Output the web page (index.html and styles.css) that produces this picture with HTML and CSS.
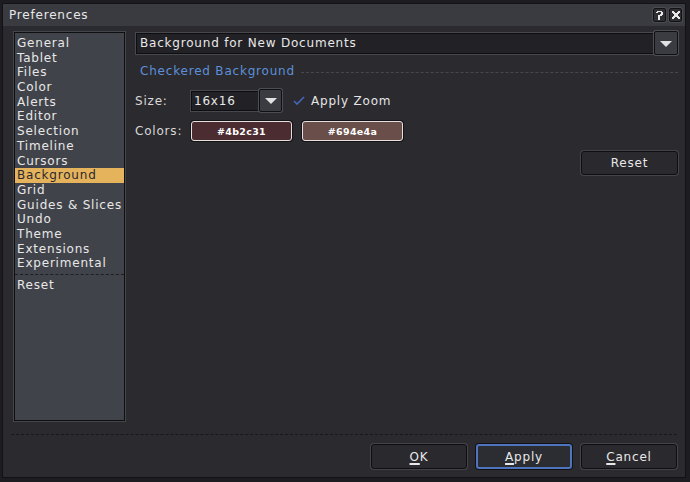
FILE: index.html
```html
<!DOCTYPE html>
<html>
<head>
<meta charset="utf-8">
<link rel="stylesheet" href="styles.css">
</head>
<body>
<div class="window">
  <div class="titlebar">
    <span class="title">Preferences</span>
    <div class="tb-buttons">
      <div class="tb-btn">
        <svg width="7" height="9" viewBox="0 0 7 9"><path d="M1 0h5v1h1v3h-1v1h-2v2h-2v-3h2v-1h1v-2h-3v1h-2v-1h1z" fill="#e8e8e8"/><rect x="2" y="7" width="2" height="2" fill="#e8e8e8"/></svg>
      </div>
      <div class="tb-btn">
        <svg width="8" height="8" viewBox="0 0 8 8"><path d="M0 0h2v1h1v1h2v-1h1v-1h2v2h-1v1h-1v2h1v1h1v2h-2v-1h-1v-1h-2v1h-1v1h-2v-2h1v-1h1v-2h-1v-1h-1z" fill="#e8e8e8"/></svg>
      </div>
    </div>
  </div>
  <div class="main">
    <div class="list">
      <div class="item">General</div>
      <div class="item">Tablet</div>
      <div class="item">Files</div>
      <div class="item">Color</div>
      <div class="item">Alerts</div>
      <div class="item">Editor</div>
      <div class="item">Selection</div>
      <div class="item">Timeline</div>
      <div class="item">Cursors</div>
      <div class="item selected">Background</div>
      <div class="item">Grid</div>
      <div class="item">Guides &amp; Slices</div>
      <div class="item">Undo</div>
      <div class="item">Theme</div>
      <div class="item">Extensions</div>
      <div class="item">Experimental</div>
      <div class="list-sep"></div>
      <div class="item">Reset</div>
    </div>
    <div class="panel">
      <div class="combo combo-wide">
        <div class="field field-wide">Background for New Documents</div>
        <div class="drop drop-big"><span class="tri"></span></div>
      </div>
      <div class="heading">
        <span class="heading-text">Checkered Background</span>
        <span class="heading-line"></span>
      </div>
      <div class="row size-row">
        <span class="label">Size:</span>
        <div class="combo combo-small">
          <div class="field field-small">16x16</div>
          <div class="drop drop-small"><span class="tri"></span></div>
        </div>
        <div class="check">
          <svg width="12" height="10" viewBox="0 0 12 10"><path d="M1 5 L4 8 L11 1" stroke="#4566b8" stroke-width="1.6" fill="none"/></svg>
          <span>Apply Zoom</span>
        </div>
      </div>
      <div class="row colors-row">
        <span class="label">Colors:</span>
        <div class="swatch swatch-a">#4b2c31</div>
        <div class="swatch swatch-b">#694e4a</div>
      </div>
      <div class="reset-row">
        <div class="btn btn-reset">Reset</div>
      </div>
    </div>
  </div>
  <div class="footer">
    <div class="footer-line"></div>
    <div class="footer-buttons">
      <div class="btn"><u>O</u>K</div>
      <div class="btn btn-focus"><u>A</u>pply</div>
      <div class="btn"><u>C</u>ancel</div>
    </div>
  </div>
</div>
</body>
</html>
```

FILE: styles.css
```css
html, body {
  margin: 0;
  padding: 0;
}
body {
  width: 690px;
  height: 482px;
  overflow: hidden;
  background: #1d1d21;
  font-family: "DejaVu Sans", sans-serif;
  font-size: 12px;
  letter-spacing: 0.8px;
  color: #e6e6e6;
}
.window {
  margin: 3px 0 0 2px;
  width: 684px;
  height: 475px;
  box-sizing: border-box;
  border: 1px solid #131316;
  background: #2b2a2f;
  display: flex;
  flex-direction: column;
}
.titlebar {
  height: 22px;
  flex: none;
  background: #3a3b41;
  display: flex;
  align-items: center;
  justify-content: space-between;
  padding: 0 3px 0 6px;
}
.title {
  color: #e8e8e8;
}
.tb-buttons {
  display: flex;
  gap: 3px;
}
.tb-btn {
  width: 13px;
  height: 14px;
  box-sizing: border-box;
  background: #2e2e33;
  border: 1px solid #121214;
  border-radius: 2px;
  box-shadow: 0 0 0 1px #4a4b51;
  display: flex;
  align-items: center;
  justify-content: center;
}
.main {
  height: 395px;
  flex: none;
  display: flex;
  padding: 6px 7px 0 11px;
  box-sizing: border-box;
  gap: 11px;
}
.list {
  width: 111px;
  height: 389px;
  box-sizing: border-box;
  border: 1px solid #0f0f12;
  box-shadow: 0 0 0 1px #45464c;
  background: #41434a;
  padding: 3px 0 0 0;
  flex: none;
}
.item {
  height: 14.7px;
  line-height: 14.7px;
  padding-left: 2px;
  color: #e8e8e8;
  white-space: nowrap;
}
.item.selected {
  background: #e6b35d;
  color: #2a292e;
}
.list-sep {
  box-sizing: border-box;
  height: 4px;
  margin-bottom: 3px;
  border-bottom: 1px dashed #1f1f23;
}
.panel {
  flex: 1;
  display: flex;
  flex-direction: column;
  margin-top: -1px;
}
.combo {
  display: flex;
  align-items: center;
}
.combo-wide {
  height: 24px;
}
.field {
  box-sizing: border-box;
  background: #222126;
  border: 1px solid #0e0e10;
  box-shadow: 0 0 0 1px #47484e;
  display: flex;
  align-items: center;
  padding-left: 3px;
  color: #e8e8e8;
}
.field-wide {
  flex: 1;
  height: 21px;
}
.drop {
  box-sizing: border-box;
  background: #3b3c42;
  border: 1px solid #101013;
  border-radius: 2px;
  box-shadow: 0 0 0 1px #4d4e54;
  display: flex;
  align-items: center;
  justify-content: center;
  flex: none;
}
.drop-big {
  width: 24px;
  height: 24px;
}
.tri {
  width: 0;
  height: 0;
  border-left: 6px solid transparent;
  border-right: 6px solid transparent;
  border-top: 6px solid #e2e2e2;
  margin-top: 1px;
}
.heading {
  margin-top: 9px;
  height: 14px;
  display: flex;
  align-items: center;
  padding-left: 4px;
}
.heading-text {
  color: #5d90d8;
  white-space: nowrap;
}
.heading-line {
  flex: 1;
  margin-left: 6px;
  border-top: 1px dashed #47484e;
  margin-top: 2px;
}
.row {
  display: flex;
  align-items: center;
}
.label {
  width: 56px;
  flex: none;
  color: #d8d8d8;
  margin-left: -1px;
}
.size-row {
  margin-top: 11px;
  height: 23px;
}
.combo-small {
  height: 23px;
}
.field-small {
  width: 68px;
  height: 20px;
  padding-left: 2px;
}
.drop-small {
  width: 23px;
  height: 23px;
}
.check {
  display: flex;
  align-items: center;
  margin-left: 11px;
  gap: 6px;
  color: #e4e4e4;
}
.colors-row {
  margin-top: 9px;
  height: 20px;
}
.swatch {
  width: 101px;
  height: 20px;
  box-sizing: border-box;
  border: 1px solid #e6e0e0;
  border-radius: 3px;
  box-shadow: 0 0 0 1px #141416;
  display: flex;
  align-items: center;
  justify-content: center;
  font-size: 9.5px;
  font-weight: bold;
  letter-spacing: 0.3px;
  color: #ffffff;
}
.swatch-a {
  background: #4b2c31;
}
.swatch-b {
  background: #694e4a;
  margin-left: 10px;
}
.reset-row {
  margin-top: 10px;
  display: flex;
  justify-content: flex-end;
}
.btn {
  width: 96px;
  height: 25px;
  box-sizing: border-box;
  background: #2a292e;
  border: 1px solid #0f0f11;
  border-radius: 3px;
  box-shadow: 0 0 0 1px #434349;
  display: flex;
  align-items: center;
  justify-content: center;
  color: #e8e8e8;
}
.btn-reset {
  width: 97px;
  height: 24px;
}
.btn-focus {
  border: 2px solid #4f74bf;
  background: #2c2d33;
  box-shadow: 0 0 0 1px #121214;
}
.btn u {
  text-decoration-thickness: 2px;
  text-underline-offset: 2px;
}
.footer {
  flex: 1;
  display: flex;
  flex-direction: column;
  padding: 0 8px 0 8px;
}
.footer-line {
  margin-top: 13px;
  border-top: 1px dashed #18181b;
}
.footer-buttons {
  margin-top: 9px;
  display: flex;
  justify-content: flex-end;
  gap: 9px;
}
```
